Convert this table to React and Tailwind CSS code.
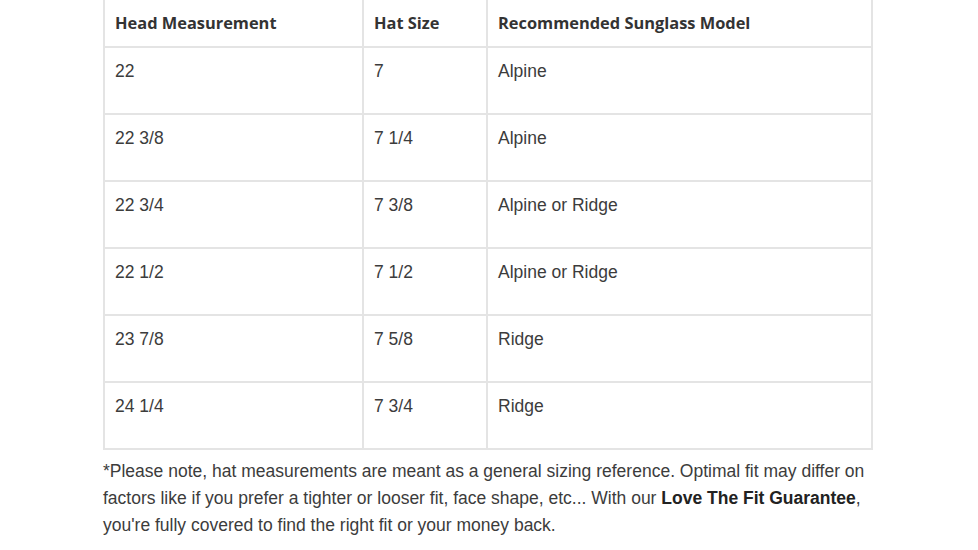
const rows = [
  ["22", "7", "Alpine"],
  ["22 3/8", "7 1/4", "Alpine"],
  ["22 3/4", "7 3/8", "Alpine or Ridge"],
  ["22 1/2", "7 1/2", "Alpine or Ridge"],
  ["23 7/8", "7 5/8", "Ridge"],
  ["24 1/4", "7 3/4", "Ridge"],
];

const headers = ["Head Measurement", "Hat Size", "Recommended Sunglass Model"];

export default function App() {
  return (
    <div className="min-h-[550px] w-[978px] bg-white pl-[103px]">
      <div className="w-[775px]">
        <table className="w-[770px] table-fixed border-collapse">
          <colgroup>
            <col className="w-[259px]" />
            <col className="w-[124px]" />
            <col />
          </colgroup>
          <thead>
            <tr className="h-[47px]">
              {headers.map((h) => (
                <th
                  key={h}
                  className="border-x-2 border-b-2 border-[#e4e4e4] px-[10px] pt-[9px] pb-[10px] text-left align-top font-['Open_Sans',sans-serif] text-[16.4px] font-bold leading-[27px] text-[#333]"
                >
                  {h}
                </th>
              ))}
            </tr>
          </thead>
          <tbody>
            {rows.map((r, i) => (
              <tr key={i} className="h-[67px]">
                {r.map((c, j) => (
                  <td
                    key={j}
                    className="border-2 border-[#e4e4e4] px-[10px] pt-[10px] align-top font-['Liberation_Sans',Arial,sans-serif] text-[17.5px] leading-[27px] text-[#3c3c3c]"
                  >
                    {c}
                  </td>
                ))}
              </tr>
            ))}
          </tbody>
        </table>
        <p className="mt-[8px] font-['Liberation_Sans',Arial,sans-serif] text-[17.5px] leading-[27px] text-[#3c3c3c]">
          *Please note, hat measurements are meant as a general sizing reference. Optimal fit may differ on factors like if you prefer a tighter or looser fit, face shape, etc... With our{" "}
          <strong className="font-bold text-[#222]">Love The Fit Guarantee</strong>, you're fully covered to find the right fit or your money back.
        </p>
      </div>
    </div>
  );
}
